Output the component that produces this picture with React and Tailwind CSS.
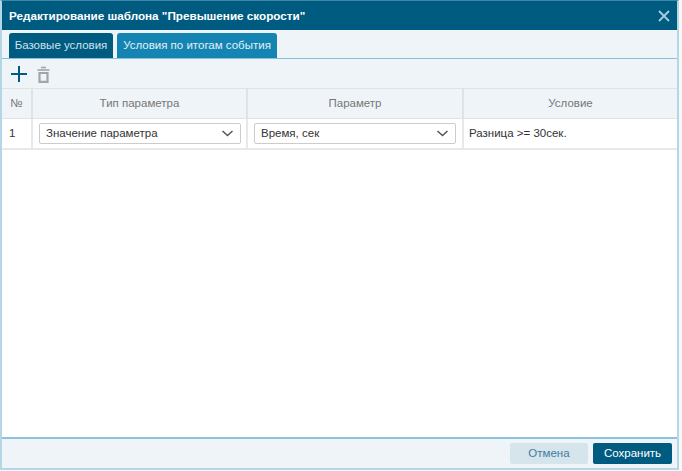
import React from "react";

function Chevron() {
  return (
    <svg width="11" height="7" viewBox="0 0 11 7" fill="none" stroke="#555" strokeWidth="1.5" className="shrink-0">
      <path d="M0.5 1 L5.5 5.5 L10.5 1" />
    </svg>
  );
}

function Select({ label }) {
  return (
    <div className="flex h-[21px] w-full items-center justify-between rounded-[2px] border border-[#ccc] bg-white pl-[6px] pr-[7px] text-[11.5px] text-[#333]">
      <span>{label}</span>
      <Chevron />
    </div>
  );
}

export default function App() {
  return (
    <div className="h-[471px] w-[682px] overflow-hidden bg-[#f7f8f8] font-['Liberation_Sans',Arial,sans-serif]">
      <div className="flex h-[470px] w-[679px] flex-col border-x-2 border-b-2 border-t border-x-[#b5d6e4] border-b-[#b5d6e4] border-t-[#3d88a8] bg-white">
        <div className="flex h-[29px] shrink-0 items-center justify-between bg-[#005b80] pl-[7px] pr-[7px]">
          <span className="text-[11.7px] font-bold text-white">Редактирование шаблона "Превышение скорости"</span>
          <svg width="12" height="12" viewBox="0 0 12 12" stroke="#a6cfe0" strokeWidth="1.8" fill="none">
            <path d="M1 1 L11 11 M11 1 L1 11" />
          </svg>
        </div>
        <div className="flex h-[29px] shrink-0 items-end gap-[4px] border-b border-[#86c1dc] bg-[#eff4f8] pl-[7px]">
          <div className="flex h-[25px] w-[104px] items-center justify-center rounded-t-[3px] bg-[#005b80] text-[11.5px] text-[#cfe3ec]">Базовые условия</div>
          <div className="flex h-[25px] w-[160px] items-center justify-center rounded-t-[3px] bg-[#1485b3] text-[11.5px] text-[#e3f0f6]">Условия по итогам события</div>
        </div>
        <div className="flex h-[29px] shrink-0 items-center gap-[10px] bg-[#eff4f8] pl-[9px] pt-[1px]">
          <svg width="16" height="16" viewBox="0 0 16 16" stroke="#005b80" strokeWidth="2" fill="none">
            <path d="M8 0 V16 M0 8 H16" />
          </svg>
          <svg width="13" height="17" viewBox="0 0 13 17" fill="none" stroke="#a0a5a8">
            <path d="M2.5 7 V15.8 H10.5 V7 Z" strokeWidth="2.2" />
            <path d="M0.5 4 H12.5" strokeWidth="1.6" />
            <path d="M4 1.5 H9" strokeWidth="1.6" />
          </svg>
        </div>
        <div className="grid h-[31px] shrink-0 grid-cols-[31px_215px_216px_1fr] border-y border-[#dfe3e6] bg-[#eff4f8] text-[11.5px] text-[#777]">
          <div className="flex items-center justify-center border-r-2 border-[#dfe3e6]">№</div>
          <div className="flex items-center justify-center border-r-2 border-[#dfe3e6]">Тип параметра</div>
          <div className="flex items-center justify-center border-r-2 border-[#dfe3e6]">Параметр</div>
          <div className="flex items-center justify-center">Условие</div>
        </div>
        <div className="grid h-[31px] shrink-0 grid-cols-[31px_215px_216px_1fr] border-b-2 border-[#e6e8ea] text-[11.5px] text-[#333]">
          <div className="flex items-center border-r-2 border-[#e6e8ea] pl-[7px]">1</div>
          <div className="flex items-center border-r-2 border-[#e6e8ea] pl-[6px] pr-[5px]"><Select label="Значение параметра" /></div>
          <div className="flex items-center border-r-2 border-[#e6e8ea] pl-[6px] pr-[6px]"><Select label="Время, сек" /></div>
          <div className="flex items-center pl-[5px]">Разница &gt;= 30сек.</div>
        </div>
        <div className="flex-1" />
        <div className="flex h-[31px] shrink-0 items-center justify-end gap-[5px] border-t-2 border-[#8cc4dd] bg-[#eff4f8] pr-[5px]">
          <div className="flex h-[21px] w-[78px] items-center justify-center rounded-[2px] bg-[#d6e4ec] text-[11.5px] text-[#3d7f9e]">Отмена</div>
          <div className="flex h-[21px] w-[79px] items-center justify-center rounded-[2px] bg-[#005b80] text-[11.5px] text-white">Сохранить</div>
        </div>
      </div>
    </div>
  );
}
